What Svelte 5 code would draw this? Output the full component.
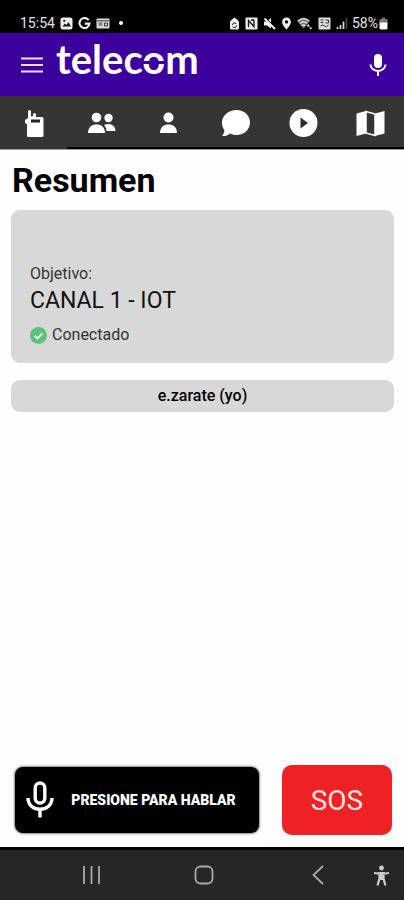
<script>
  let activeTab = $state('radio');
  let talking = $state(false);

  const tabs = [
    { id: 'radio', label: 'Radio' },
    { id: 'groups', label: 'Grupos' },
    { id: 'contacts', label: 'Contactos' },
    { id: 'chat', label: 'Mensajes' },
    { id: 'media', label: 'Multimedia' },
    { id: 'map', label: 'Mapa' }
  ];
</script>

<div class="app">
  <div class="status">
    <div class="status-side left">
      <span>15:54</span>
      <svg width="13" height="13" viewBox="0 0 13 13"><rect x="0.5" y="0.5" width="12" height="12" rx="2.5" fill="#eee" /><path d="M2.5 9.5 5 6.5l1.5 1.5 2-3 2.3 4.5z" fill="#111" /><circle cx="4.2" cy="3.8" r="1.1" fill="#111" /></svg>
      <svg width="13" height="13" viewBox="0 0 13 13"><path d="M10.6 3.1A5 5 0 1 0 11.5 6.6H6.8" fill="none" stroke="#eee" stroke-width="2.1" /></svg>
      <svg width="14" height="13" viewBox="0 0 14 13"><rect x="0.5" y="1.5" width="13" height="10" rx="1" fill="#ddd" /><path d="M1 3.8h12M2.5 6h4M2.5 8h4M8.5 6h3v3h-3z" stroke="#333" fill="none" /></svg>
      <span class="dot"></span>
    </div>
    <div class="status-side right">
      <svg width="11" height="13" viewBox="0 0 11 13"><path d="M5.5 0.5 8 2.5l2 2V11q0 1.5-1.5 1.5h-6Q1 12.5 1 11V4.5l2-2z" fill="#eee" /><path d="M3.5 8a2 2 0 0 1 3.8-1M7.5 8.500a2 2 0 0 1-3.8 1" stroke="#222" fill="none" /></svg>
      <svg width="13" height="13" viewBox="0 0 13 13"><rect x="0.5" y="0.5" width="12" height="12" rx="1" fill="#eee" /><path d="M3.5 10V3.5L9 9.5V3M6 3h3" stroke="#111" stroke-width="1.3" fill="none" /></svg>
      <svg width="13" height="13" viewBox="0 0 13 13"><path d="M1 4.500h3L8 1v10.500L4 8.500H1z" fill="#eee" /><path d="m2.500 1 10 10" stroke="#000" stroke-width="1.300" /><path d="m1.500 1.500 10.500 10.500" stroke="#eee" stroke-width="2" /></svg>
      <svg width="11" height="13" viewBox="0 0 11 13"><path d="M5.5 0.5a4.4 4.4 0 0 0-4.4 4.4c0 3 4.4 7.6 4.4 7.6s4.4-4.6 4.4-7.6A4.4 4.4 0 0 0 5.5 0.5z" fill="#eee" /><circle cx="5.5" cy="4.9" r="1.7" fill="#000" /></svg>
      <svg width="16" height="13" viewBox="0 0 16 13"><path d="M0 4Q6.500-2 13 4L6.500 11.500z" fill="#777" /><path d="M1 4q5.500-5 11 0M3 6.500q3.500-3.500 7 0M5 9q1.500-2 3 0" stroke="#ddd" stroke-width="1.500" fill="none" /><path d="M9.500 9.500 11.300 7l1.700 2.500zM12 10.500l1.700 2 1.800-2z" fill="#eee" /></svg>
      <svg width="13" height="13" viewBox="0 0 13 13"><rect x="0.5" y="0.5" width="12" height="12" rx="1" fill="#ddd" /><path d="M2.5 3h3M2.5 5.5h3M7.5 3h3v3h-3M2.5 9q2-2 4 0t4-1" stroke="#333" fill="none" /></svg>
      <svg width="13" height="13" viewBox="0 0 13 13"><path d="M1.5 12v-2M4.5 12V8M7.5 12V4.5" stroke="#ddd" stroke-width="1.7" /><path d="M10.5 12V1" stroke="#444" stroke-width="1.7" /></svg>
      <span>58%</span>
      <svg width="9" height="13" viewBox="0 0 9 13"><path d="M3 0.5h3V2h2.5v4h-8V2H3z" fill="#777" /><path d="M0.5 5.5h8V11q0 1.5-1.5 1.5H2Q0.5 12.5 0.5 11z" fill="#fff" /></svg>
    </div>
  </div>

  <header>
    <button class="plain" aria-label="Menú">
      <svg width="22" height="18" viewBox="0 0 22 18"><path d="M0 2.5h22M0 9h22M0 15.5h22" stroke="#e8e0fa" stroke-width="2" /></svg>
    </button>
    <a class="brand" href="#inicio">telec<span class="cut">o</span>m</a>
    <button class="plain" aria-label="Micrófono">
      <svg width="18" height="24" viewBox="0 0 18 24"><rect x="5" y="1" width="8" height="14" rx="4" fill="#fff" /><path d="M1.5 11.5a7.5 6.5 0 0 0 15 0M9 18v5" stroke="#fff" stroke-width="2" fill="none" /></svg>
    </button>
  </header>

  <nav>
    {#each tabs as tab}
      <button class="tab" class:active={activeTab === tab.id} aria-label={tab.label} onclick={() => (activeTab = tab.id)}>
        <svg width="30" height="30" viewBox="0 0 30 30" fill="#fff">
          {#if tab.id === 'radio'}
            <path d="M9 2.500a1.500 1.500 0 0 1 3 0V7h2V5.500a1.500 1.500 0 0 1 3 0V8h6q1.500 0 1.500 1.500v17q0 1.500-1.500 1.500H9.500Q8 28 8 26.500V15l-2-1v-3l3-2z" /><rect x="12" y="10.500" width="9" height="3" fill="#222" />
          {:else if tab.id === 'groups'}
            <circle cx="10.500" cy="8.500" r="4.800" /><path d="M2 24c0-6 4-8.500 8.500-8.500S19 18 19 24z" /><circle cx="22.500" cy="9" r="4.200" /><path d="M20.500 22c0-2.500-1-4.500-2.500-6 5-2.500 11.500-.5 11.500 6z" />
          {:else if tab.id === 'contacts'}
            <circle cx="15.500" cy="8.500" r="5" /><path d="M7 24c0-6 4-8.500 8.500-8.500S24 18 24 24z" />
          {:else if tab.id === 'chat'}
            <path d="M15.500 1C23 1 29 6.300 29 13.500S23 26 15.500 26c-2.500 0-4.700-.6-6.500-1.500C6.500 26.500 4 27.300 1 27c1.500-1.800 2.500-4 2.300-6C1.700 18.800 1 16.300 1 13.500 1 6.300 8 1 15.500 1z" />
          {:else if tab.id === 'media'}
            <circle cx="15.500" cy="14" r="14" /><path d="m12.500 8.500 7.500 5.500-7.500 5.500z" fill="#2c2c2c" />
          {:else}
            <path d="M1.500 4.500 11 2v22.500L1.500 27zM20 4.500 29.500 2v22.500L20 27z" /><path d="m11 2.500 9 2.500v21.500l-9-2.500z" fill="none" stroke="#fff" stroke-width="1.500" />
          {/if}
        </svg>
      </button>
    {/each}
  </nav>

  <main>
    <h1>Resumen</h1>
    <section class="card">
      <p class="label">Objetivo:</p>
      <h2>CANAL 1 - IOT</h2>
      <p class="state">
        <svg width="17" height="17" viewBox="0 0 17 17"><circle cx="8.5" cy="8.5" r="8.5" fill="#5bc27a" /><path d="m4.7 8.7 2.7 2.6 5-5" fill="none" stroke="#e9f5ec" stroke-width="1.9" /></svg>
        Conectado
      </p>
    </section>
    <div class="user">e.zarate (yo)</div>
  </main>

  <div class="actions">
    <button class="talk" aria-pressed={talking} onclick={() => (talking = !talking)}>
      <svg width="28" height="38" viewBox="0 0 28 38" fill="none" stroke="#fff" stroke-width="3.4"><rect x="9.2" y="2" width="9.6" height="20" rx="4.8" /><path d="M2 17c0 15 24 15 24 0M14 28V36.500" /></svg>
      <span>PRESIONE PARA HABLAR</span>
    </button>
    <button class="sos">SOS</button>
  </div>

  <footer>
    <button class="plain" aria-label="Recientes">
      <svg width="20" height="20" viewBox="0 0 20 20"><path d="M3 1v18M10.500 1v18M18 1v18" stroke="#aaa" stroke-width="1.8" /></svg>
    </button>
    <button class="plain" aria-label="Inicio">
      <svg width="20" height="20" viewBox="0 0 20 20"><rect x="1.5" y="1.5" width="17" height="17" rx="5" fill="none" stroke="#aaa" stroke-width="1.8" /></svg>
    </button>
    <button class="plain" aria-label="Atrás">
      <svg width="20" height="20" viewBox="0 0 20 20"><path d="m16 1-9.500 9 9.500 9" fill="none" stroke="#aaa" stroke-width="1.8" /></svg>
    </button>
    <button class="plain" aria-label="Accesibilidad">
      <svg width="18" height="22" viewBox="0 0 18 22"><circle cx="9.500" cy="4" r="2.400" fill="#ccc" /><path d="M2 9q7.500 1.500 15 0M5.500 21.500l2-7V9h4v5.500l2 7M9.500 9v7" fill="none" stroke="#ccc" stroke-width="2.200" /></svg>
    </button>
  </footer>
</div>

<style>
  :global(body) {
    margin: 0;
    background: #fefefe;
  }

  .app {
    display: flex;
    flex-direction: column;
    min-height: 100vh;
    font-family: Roboto, "Liberation Sans", sans-serif;
    color: #111;
  }

  svg {
    display: block;
    flex: none;
  }

  button {
    border: 0;
    padding: 0;
    font-family: inherit;
    cursor: pointer;
  }

  .plain {
    background: none;
  }

  .status {
    display: flex;
    justify-content: space-between;
    box-sizing: border-box;
    height: 33px;
    padding: 14px 16px 0 20px;
    background: #000;
    color: #e4e4e4;
    font-size: 14px;
    line-height: 18px;
  }

  .status-side {
    display: flex;
    align-items: center;
    height: 18px;
    gap: 5px;
  }

  .right {
    gap: 5px;
  }

  .right span {
    margin: 0 -4px 0 -2px;
  }

  .dot {
    width: 4px;
    height: 4px;
    margin-left: 4px;
    border-radius: 50%;
    background: #fff;
  }

  header {
    display: flex;
    align-items: center;
    height: 63px;
    padding: 0 17px 0 21px;
    background: #3c009d;
  }

  .brand {
    flex: 1;
    margin-left: 13px;
    padding-bottom: 12px;
    color: #fff;
    font-family: Lato, sans-serif;
    font-size: 40px;
    font-weight: 700;
    line-height: 44px;
    text-decoration: none;
  }

  .cut {
    position: relative;
  }

  .cut::after {
    content: "";
    position: absolute;
    left: 0;
    right: 0;
    top: 26px;
    height: 3px;
    background: #3c009d;
  }

  nav {
    display: grid;
    grid-template-columns: repeat(6, 1fr);
    height: 54px;
    background: #353535;
    border-bottom: 1px solid #999;
    box-sizing: border-box;
  }

  .tab {
    display: grid;
    place-items: center;
    padding-top: 4px;
    background: none;
    border-bottom: 2px solid #000;
  }

  .tab.active {
    border-bottom-color: #353535;
  }

  main {
    flex: 1;
    padding: 11px 10px 0 11px;
  }

  h1 {
    margin: 0 1px;
    font-size: 34px;
    font-weight: 700;
    line-height: 38px;
    color: #000;
  }

  .card {
    margin-top: 11px;
    padding: 52px 19px 16px;
    border-radius: 9px;
    background: #d8d8d8;
  }

  .label,
  .state {
    margin: 0;
    font-size: 16px;
    line-height: 24px;
    color: #333;
  }

  h2 {
    margin: 1px 0 8px;
    font-size: 23px;
    font-weight: 400;
    line-height: 28px;
  }

  .state {
    display: flex;
    align-items: center;
    gap: 5px;
  }

  .user {
    margin-top: 17px;
    border-radius: 9px;
    background: #d8d8d8;
    font-size: 16px;
    font-weight: 500;
    line-height: 32px;
    text-align: center;
    color: #000;
  }

  .actions {
    display: flex;
    align-items: center;
    gap: 23px;
    padding: 0 12px 12px 15px;
  }

  .talk {
    display: flex;
    flex: 1;
    align-items: center;
    height: 66px;
    padding-left: 11px;
    border-radius: 8px;
    background: #000;
    box-shadow: 0 0 2px 1px #888;
    color: #fff;
    font-size: 14px;
    font-weight: 900;
  }

  .talk span {
    flex: 1;
    text-align: center;
    padding-right: 6px;
  }

  .sos {
    width: 110px;
    height: 70px;
    border-radius: 10px;
    background: #ee2224;
    box-shadow: 0 0 1px #f5a9a9;
    color: #ffe3e3;
    font-size: 28px;
  }

  footer {
    display: grid;
    grid-template-columns: 82px 1fr 82px 46px;
    align-items: center;
    justify-items: center;
    height: 50px;
    padding-left: 50px;
    border-top: 3px solid #000;
    background: #262626;
  }
</style>
